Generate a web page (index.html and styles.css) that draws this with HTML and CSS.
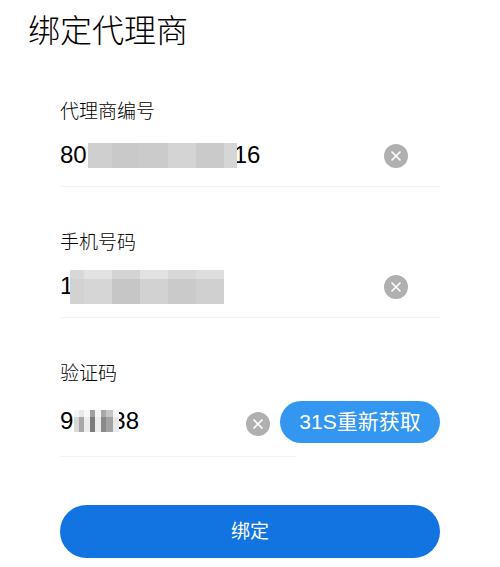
FILE: index.html
```html
<!DOCTYPE html>
<html lang="zh-CN">
<head>
<meta charset="UTF-8">
<meta name="viewport" content="width=device-width, initial-scale=1.0">
<title>绑定代理商</title>
<link rel="stylesheet" href="styles.css">
</head>
<body>
<h1 class="page-title">绑定代理商</h1>

<form class="bind-form">
    <div class="field">
        <div class="field-label">代理商编号</div>
        <div class="field-row">
            <div class="field-value">80<span class="mosaic mosaic-agent"></span>16</div>
            <svg class="clear-icon" viewBox="0 0 24 24"><circle cx="12" cy="12" r="12"/><path d="M7.5 7.5l9 9M16.5 7.5l-9 9"/></svg>
        </div>
    </div>

    <div class="field">
        <div class="field-label">手机号码</div>
        <div class="field-row">
            <div class="field-value">1<span class="mosaic mosaic-phone"></span></div>
            <svg class="clear-icon" viewBox="0 0 24 24"><circle cx="12" cy="12" r="12"/><path d="M7.5 7.5l9 9M16.5 7.5l-9 9"/></svg>
        </div>
    </div>

    <div class="field field-code">
        <div class="field-label">验证码</div>
        <div class="code-row">
            <div class="field-row code-input">
                <div class="field-value">9<span class="mosaic mosaic-code"></span>38</div>
                <svg class="clear-icon" viewBox="0 0 24 24"><circle cx="12" cy="12" r="12"/><path d="M7.5 7.5l9 9M16.5 7.5l-9 9"/></svg>
            </div>
            <div class="resend-btn">31S重新获取</div>
        </div>
    </div>

    <div class="submit-btn">绑定</div>
</form>
</body>
</html>
```

FILE: styles.css
```css
body {
    margin: 0;
    background-color: #fff;
    color: #000;
    font-family: "Liberation Sans", "Noto Sans CJK SC", sans-serif;
}
.page-title {
    margin: 0;
    padding: 12px 0 0 28px;
    font-size: 32px;
    line-height: 38px;
    font-weight: 300;
}
.bind-form {
    padding: 0 60px;
    margin-top: 50px;
}
.field {
    height: 131px;
}
.field-label {
    font-size: 19px;
    line-height: 24px;
    font-weight: 300;
}
.field-row {
    display: flex;
    justify-content: space-between;
    align-items: center;
    height: 62px;
    padding-right: 32px;
    border-bottom: 1px solid #f2f2f2;
}
.field-value {
    display: flex;
    align-items: center;
    font-size: 24px;
}
.mosaic {
    display: block;
    position: relative;
}
.mosaic-agent {
    width: 149px;
    height: 25px;
    margin: 0 -3px 0 1px;
    background: linear-gradient(to right, #cfcfcf 24px, #c9c9c9 24px 51px, #cbcbcb 51px 80px, #d4d4d4 80px 108px, #cacaca 108px 136px, #d6d6d6 136px);
}
.mosaic-phone {
    width: 154px;
    height: 34px;
    margin: 1px 0 0 -3px;
    background:
        linear-gradient(to right, #d8d8d8 14px, #e2e2e2 14px 42px, #d4d4d4 42px 70px, #e2e2e2 70px 98px, #d8d8d8 98px 126px, #dedede 126px) top / 100% 9px no-repeat,
        linear-gradient(to right, #d2d2d2 14px, #d6d6d6 14px 42px, #c6c6c6 42px 70px, #d2d2d2 70px 98px, #cacaca 98px 126px, #d0d0d0 126px);
}
.mosaic-code {
    width: 45px;
    height: 22px;
    margin: 0 -7px 0 1px;
    background:
        linear-gradient(to right, #f6f6f6 5px, #e8e8e8 5px 10px, #f8f8f8 10px 16px, #a0a0a0 16px 21px, #f4f4f4 21px 27px, #a8a8a8 27px 32px, #c4c4c4 32px 39px, #f4f4f4 39px) top / 100% 7px no-repeat,
        linear-gradient(to right, #d8d8d8 5px, #a8a8a8 5px 10px, #ececec 10px 16px, #7c7c7c 16px 21px, #ececec 21px 27px, #8a8a8a 27px 32px, #a2a2a2 32px 39px, #e8e8e8 39px);
}
.clear-icon {
    width: 24px;
    height: 24px;
    flex: none;
    margin-top: 2px;
}
.clear-icon circle {
    fill: #b0b0b0;
}
.clear-icon path {
    fill: none;
    stroke: #fff;
    stroke-width: 1.6;
}
.code-row {
    display: flex;
    align-items: flex-start;
}
.code-input {
    width: 236px;
    flex: none;
    height: 71px;
    padding-right: 0;
    box-sizing: border-box;
}
.code-input .clear-icon {
    margin: 6px 26px 0 0;
}
.resend-btn {
    flex: none;
    width: 160px;
    height: 42px;
    margin: 15px 0 0 -16px;
    border-radius: 21px;
    background-color: #3396f0;
    color: #fff;
    font-size: 21px;
    line-height: 42px;
    text-align: center;
}
.field-code {
    height: 143px;
}
.submit-btn {
    height: 53px;
    border-radius: 27px;
    background-color: #1274e0;
    color: #fff;
    font-size: 19px;
    line-height: 53px;
    text-align: center;
}
```
